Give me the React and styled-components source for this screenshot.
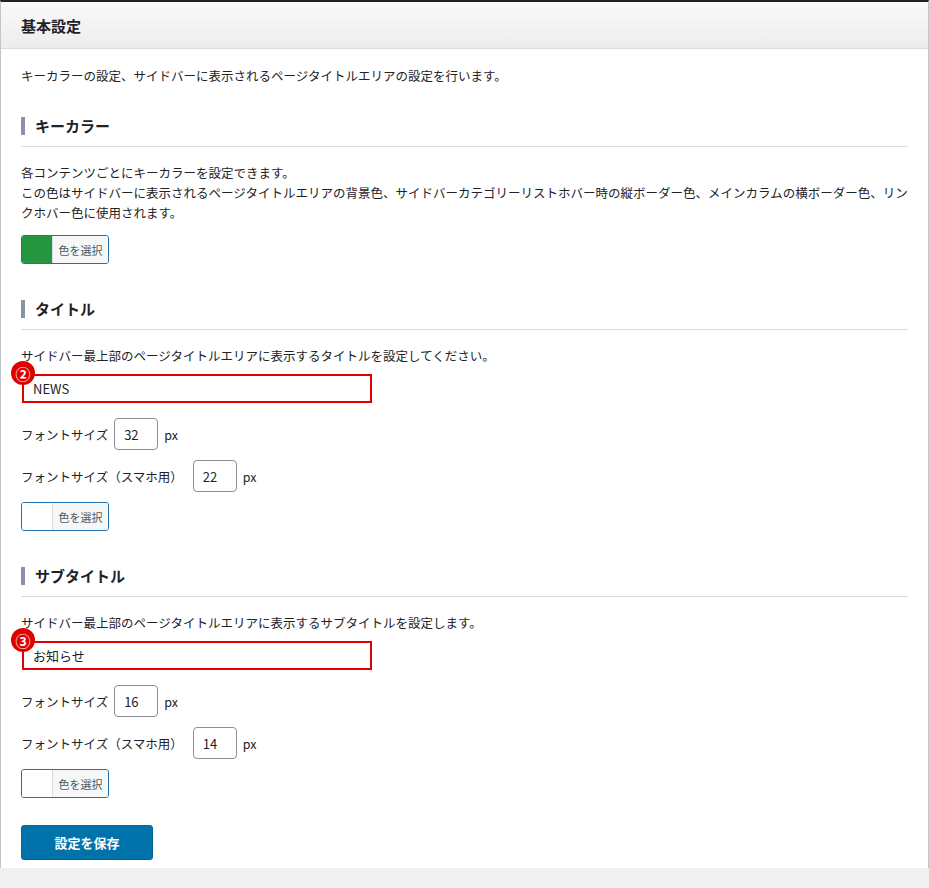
import React from 'react';
import styled, { createGlobalStyle } from 'styled-components';

const Global = createGlobalStyle`
  body { margin: 0; background: #f0f0f1; font-family: "Noto Sans CJK JP", "Noto Sans", sans-serif; color: #1d2327; }
`;

const Panel = styled.div`
  background: #fff;
  border-top: 2px solid #1d2327;
  border-left: 1px solid #c3c4c7;
  border-right: 1px solid #c3c4c7;
  height: 868px;
  box-sizing: border-box;
`;

const Header = styled.div`
  height: 46px;
  background: linear-gradient(#fafafa, #ececec);
  border-bottom: 1px solid #dcdcde;
  display: flex;
  align-items: center;
  padding-left: 20px;
  font-size: 15px;
  font-weight: 700;
`;

const Body = styled.div`
  padding: 17px 20px 0 20px;
  font-size: 12.5px;
`;

const Text = styled.p`
  margin: 0 0 ${p => p.mb || 0}px;
  line-height: 20px;
`;

const Heading = styled.h3`
  margin: 0 0 16px;
  font-size: 15px;
  font-weight: 700;
  display: flex;
  align-items: center;
  gap: 10px;
  padding-bottom: 10px;
  border-bottom: 1px solid #dcdcde;
  &::before {
    content: '';
    width: 4px;
    height: 18px;
    background: #8a93a6;
  }
`;

const ColorButton = styled.div`
  width: 88px;
  height: 29px;
  box-sizing: border-box;
  border: 1px solid #2271b1;
  border-radius: 3px;
  display: flex;
  overflow: hidden;
  margin-bottom: ${p => p.mb}px;
`;

const Swatch = styled.div`
  width: 30px;
  background: ${p => p.color};
  border-right: 1px solid #dcdcde;
`;

const SwatchLabel = styled.div`
  flex: 1;
  background: #f6f7f7;
  font-size: 11px;
  color: #50575e;
  display: flex;
  align-items: center;
  justify-content: center;
`;

const Field = styled.div`
  position: relative;
  width: 350px;
  height: 29px;
  box-sizing: border-box;
  border: 2px solid #e00000;
  padding-left: 9px;
  display: flex;
  align-items: center;
  font-size: 13px;
  margin: 8px 0 15px 1px;
`;

const Badge = styled.span`
  position: absolute;
  left: -13px;
  top: -15px;
  width: 24px;
  height: 24px;
  border-radius: 50%;
  background: #e00000;
  color: #fff;
  font-size: 15px;
  font-weight: 700;
  display: flex;
  align-items: center;
  justify-content: center;
`;

const Row = styled.div`
  display: flex;
  align-items: center;
  gap: 6px;
  height: 32px;
  margin-bottom: 10px;
`;

const NumInput = styled.div`
  width: 44px;
  height: 32px;
  box-sizing: border-box;
  border: 1px solid #8c8f94;
  border-radius: 4px;
  display: flex;
  align-items: center;
  padding-left: 9px;
  font-size: 13px;
  margin-left: ${p => p.ml || 0}px;
`;

const SaveButton = styled.button`
  width: 132px;
  height: 35px;
  background: #0073aa;
  border: 1px solid #006799;
  border-radius: 3px;
  color: #fff;
  font-family: inherit;
  font-size: 13px;
  font-weight: 700;
`;

function TitleBlock({ badge, value, size, spSize, mb }) {
  return (
    <>
      <Field><Badge>{badge}</Badge>{value}</Field>
      <Row>フォントサイズ<NumInput>{size}</NumInput>px</Row>
      <Row>フォントサイズ（スマホ用）<NumInput ml={4}>{spSize}</NumInput>px</Row>
      <ColorButton mb={mb}><Swatch color="#fff" /><SwatchLabel>色を選択</SwatchLabel></ColorButton>
    </>
  );
}

export default function App() {
  return (
    <>
      <Global />
      <Panel>
        <Header>基本設定</Header>
        <Body>
          <Text mb={29}>キーカラーの設定、サイドバーに表示されるページタイトルエリアの設定を行います。</Text>
          <Heading>キーカラー</Heading>
          <Text>各コンテンツごとにキーカラーを設定できます。</Text>
          <Text mb={12}>この色はサイドバーに表示されるページタイトルエリアの背景色、サイドバーカテゴリーリストホバー時の縦ボーダー色、メインカラムの横ボーダー色、リンクホバー色に使用されます。</Text>
          <ColorButton mb={34}><Swatch color="#25963f" /><SwatchLabel>色を選択</SwatchLabel></ColorButton>
          <Heading>タイトル</Heading>
          <Text>サイドバー最上部のページタイトルエリアに表示するタイトルを設定してください。</Text>
          <TitleBlock badge="②" value="NEWS" size="32" spSize="22" mb={34} />
          <Heading>サブタイトル</Heading>
          <Text>サイドバー最上部のページタイトルエリアに表示するサブタイトルを設定します。</Text>
          <TitleBlock badge="③" value="お知らせ" size="16" spSize="14" mb={27} />
          <SaveButton>設定を保存</SaveButton>
        </Body>
      </Panel>
    </>
  );
}
